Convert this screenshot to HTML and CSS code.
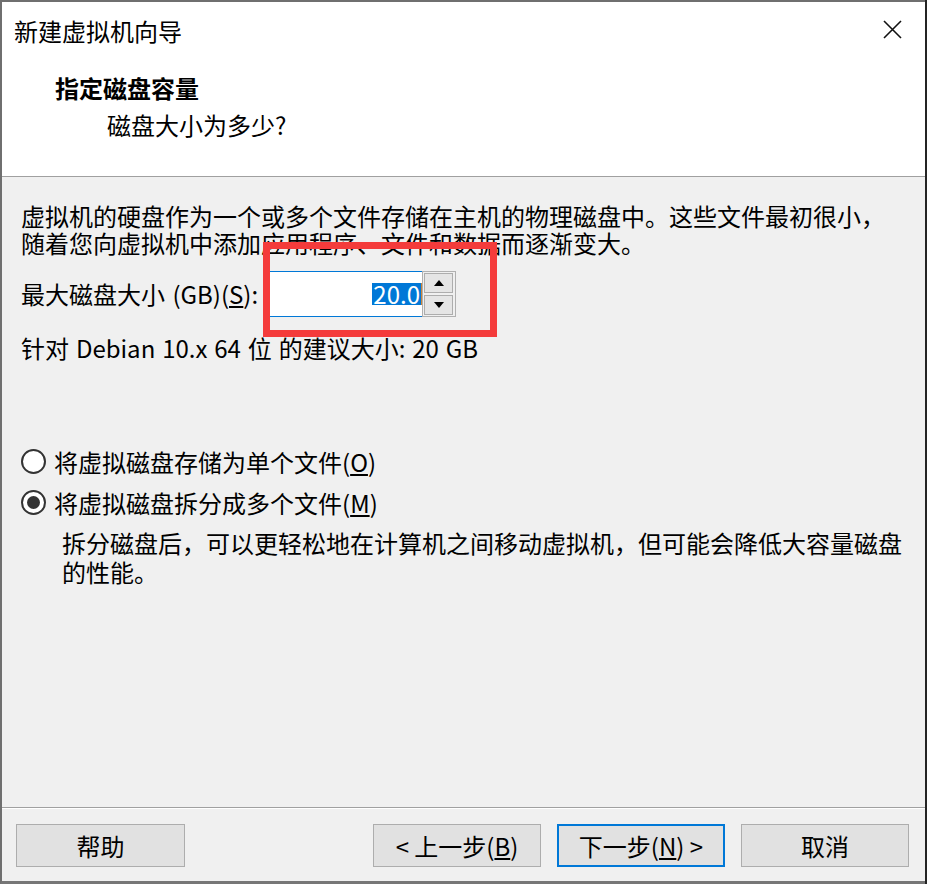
FILE: index.html
```html
<!DOCTYPE html>
<html lang="zh-CN">
<head>
<meta charset="utf-8">
<title>新建虚拟机向导</title>
<link rel="stylesheet" href="styles.css">
</head>
<body>
<div class="window">
  <header class="header">
    <div class="titlebar">
      <div class="title">新建虚拟机向导</div>
      <svg class="close" width="19" height="19" viewBox="0 0 19 19" aria-label="关闭">
        <path d="M1 1 L18 18 M18 1 L1 18" stroke="#111" stroke-width="1.6" fill="none"/>
      </svg>
    </div>
    <div class="heading">指定磁盘容量</div>
    <div class="subheading">磁盘大小为多少?</div>
  </header>

  <main class="content">
    <p class="intro">虚拟机的硬盘作为一个或多个文件存储在主机的物理磁盘中。这些文件最初很小，<br>随着您向虚拟机中添加应用程序、文件和数据而逐渐变大。</p>

    <div class="size-row">
      <label class="size-label">最大磁盘大小 (GB)(<u>S</u>):</label>
      <div class="spinbox">
        <div class="field"><span class="sel">20.0</span><span class="caret"></span></div>
        <div class="spin">
          <div class="spin-btn"><span class="tri-up"></span></div>
          <div class="spin-btn"><span class="tri-down"></span></div>
        </div>
        <div class="annotation"></div>
      </div>
    </div>

    <p class="recommend">针对 Debian 10.x 64 位 的建议大小: 20 GB</p>

    <div class="radio-row first">
      <span class="radio"></span>
      <span>将虚拟磁盘存储为单个文件(<u>O</u>)</span>
    </div>
    <div class="radio-row">
      <span class="radio checked"></span>
      <span>将虚拟磁盘拆分成多个文件(<u>M</u>)</span>
    </div>
    <div class="desc">
      <div class="desc-line">拆分磁盘后，可以更轻松地在计算机之间移动虚拟机，但可能会降低大容量磁盘</div>
      <div class="desc-line">的性能。</div>
    </div>
  </main>

  <footer class="footer">
    <div class="btn">帮助</div>
    <div class="spacer"></div>
    <div class="btn">&lt; 上一步(<u>B</u>)</div>
    <div class="btn default">下一步(<u>N</u>) &gt;</div>
    <div class="btn">取消</div>
  </footer>
</div>
</body>
</html>
```

FILE: styles.css
```css
html, body {
  margin: 0;
  padding: 0;
}
body {
  background: #242424;
  width: 927px;
  height: 884px;
  overflow: hidden;
  font-family: "Noto Sans CJK SC", "Noto Sans", sans-serif;
  font-size: 24px;
  color: #000;
}
.window {
  box-sizing: border-box;
  width: 925px;
  height: 884px;
  border-top: 2px solid #6f6f6f;
  border-left: 2px solid #6f6f6f;
  border-bottom: 3px solid #767676;
  display: flex;
  flex-direction: column;
  background: #f0f0f0;
}
.header {
  box-sizing: border-box;
  height: 175px;
  flex: 0 0 175px;
  background: #fff;
  border-bottom: 1px solid #a0a0a0;
  padding-top: 14px;
}
.titlebar {
  display: flex;
  justify-content: space-between;
  align-items: flex-start;
  padding-left: 12px;
  padding-right: 23px;
  height: 30px;
}
.title {
  line-height: 30px;
}
.close {
  margin-top: 4px;
}
.heading {
  font-weight: 700;
  line-height: 30px;
  margin-top: 27px;
  padding-left: 53px;
}
.subheading {
  line-height: 30px;
  margin-top: 7px;
  padding-left: 105px;
}
.content {
  flex: 1;
  padding: 25px 0 0 19px;
  white-space: nowrap;
}
.content p {
  margin: 0;
}
.intro {
  line-height: 27px;
}
.size-row {
  display: flex;
  align-items: center;
  margin-top: 15px;
  height: 46px;
}
.size-label {
  flex: 0 0 248px;
  line-height: 30px;
  word-spacing: 2px;
}
.spinbox {
  position: relative;
  display: flex;
  height: 46px;
}
.field {
  box-sizing: border-box;
  width: 153px;
  height: 46px;
  background: #fff;
  border: 1px solid #0078d7;
  border-right: none;
  display: flex;
  justify-content: flex-end;
  align-items: center;
}
.sel {
  background: #0078d7;
  color: #fff;
  height: 22px;
  line-height: 22px;
  padding: 0 1px;
}
.caret {
  width: 1px;
  height: 22px;
  background: #c8833a;
}
.spin {
  box-sizing: border-box;
  width: 34px;
  height: 46px;
  border: 1px solid #b0b0b0;
  padding: 1px 2px 1px 1px;
  display: flex;
  flex-direction: column;
  gap: 2px;
  background: #f0f0f0;
}
.spin-btn {
  box-sizing: border-box;
  height: 20px;
  border: 1px solid #adadad;
  background: #e5e5e5;
  display: flex;
  align-items: center;
  justify-content: center;
}
.tri-up {
  width: 0;
  height: 0;
  border-left: 5px solid transparent;
  border-right: 5px solid transparent;
  border-bottom: 6px solid #000;
}
.tri-down {
  width: 0;
  height: 0;
  border-left: 5px solid transparent;
  border-right: 5px solid transparent;
  border-top: 6px solid #000;
}
.annotation {
  position: absolute;
  left: -6px;
  top: -29px;
  width: 234px;
  height: 95px;
  box-sizing: border-box;
  border: 7px solid #f43b3b;
  pointer-events: none;
}
.content .recommend {
  line-height: 27px;
  margin-top: 17px;
  word-spacing: 1.5px;
}
.radio-row {
  display: flex;
  align-items: center;
  height: 30px;
  gap: 8px;
  margin-top: 11px;
}
.radio-row.first {
  margin-top: 85px;
}
.radio {
  box-sizing: border-box;
  width: 25px;
  height: 25px;
  border: 2px solid #333;
  border-radius: 50%;
  background: #fff;
  display: flex;
  align-items: center;
  justify-content: center;
}
.radio.checked::after {
  content: "";
  width: 13px;
  height: 13px;
  border-radius: 50%;
  background: #333;
}
.desc {
  margin-top: 12px;
  padding-left: 41px;
}
.desc-line {
  height: 28.5px;
  line-height: 28.5px;
  overflow: visible;
}
.footer {
  box-sizing: border-box;
  flex: 0 0 74px;
  border-top: 1px solid #a0a0a0;
  box-shadow: inset 0 1px 0 #fff;
  padding: 16px 16px 0 14px;
  display: flex;
  align-items: flex-start;
  gap: 16px;
}
.spacer {
  flex: 1;
}
.btn {
  box-sizing: border-box;
  width: 168px;
  height: 43px;
  background: #e1e1e1;
  border: 1px solid #adadad;
  display: flex;
  align-items: center;
  justify-content: center;
  line-height: 30px;
}
.btn:first-child {
  width: 169px;
}
.btn.default {
  border: 2px solid #0078d7;
}
```
